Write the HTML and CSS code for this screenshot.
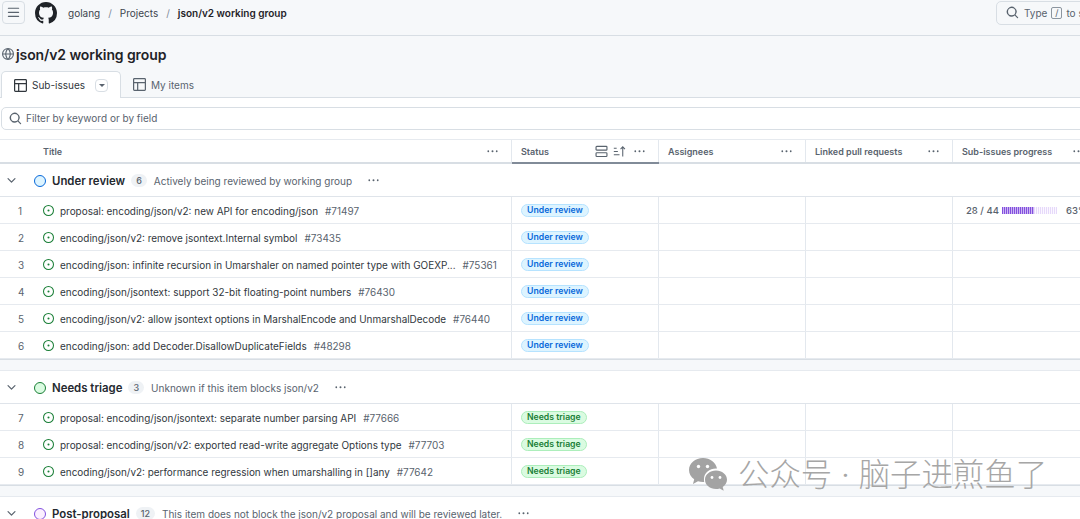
FILE: index.html
```html
<!DOCTYPE html>
<html lang="en">
<head>
<meta charset="utf-8">
<title>json/v2 working group</title>
<link rel="stylesheet" href="styles.css">
</head>
<body>
<svg class="defs" width="0" height="0" aria-hidden="true">
  <symbol id="issue" viewBox="0 0 16 16"><path fill="#1a7f37" d="M8 9.5a1.5 1.5 0 1 0 0-3 1.5 1.5 0 0 0 0 3Z"/><path fill="#1a7f37" d="M8 0a8 8 0 1 1 0 16A8 8 0 0 1 8 0ZM1.5 8a6.5 6.5 0 1 0 13 0 6.5 6.5 0 0 0-13 0Z"/></symbol>
  <symbol id="table" viewBox="0 0 16 16"><path fill="currentColor" d="M0 1.75C0 .784.784 0 1.75 0h12.5C15.216 0 16 .784 16 1.75v12.5A1.75 1.75 0 0 1 14.25 16H1.75A1.75 1.75 0 0 1 0 14.25ZM1.5 6.5v7.75c0 .138.112.25.25.25H5v-8Zm5 8h7.75a.25.25 0 0 0 .25-.25V6.5h-8ZM14.5 5V1.75a.25.25 0 0 0-.25-.25H1.75a.25.25 0 0 0-.25.25V5Z"/></symbol>
  <symbol id="search" viewBox="0 0 16 16"><path fill="currentColor" d="M10.68 11.74a6 6 0 0 1-7.922-8.982 6 6 0 0 1 8.982 7.922l3.04 3.04a.749.749 0 1 1-1.06 1.06ZM11.5 7a4.499 4.499 0 1 0-8.997 0A4.499 4.499 0 0 0 11.5 7Z"/></symbol>
  <symbol id="kebab" viewBox="0 0 16 16"><path fill="currentColor" d="M8 9a1.5 1.5 0 1 0 0-3 1.5 1.5 0 0 0 0 3ZM1.500 9a1.500 1.500 0 1 0 0-3 1.500 1.500 0 0 0 0 3Zm13 0a1.500 1.500 0 1 0 0-3 1.500 1.500 0 0 0 0 3Z"/></symbol>
  <symbol id="chev" viewBox="0 0 16 16"><path fill="currentColor" d="M12.78 5.22a.749.749 0 0 1 0 1.06l-4.25 4.25a.749.749 0 0 1-1.06 0L3.22 6.28a.749.749 0 1 1 1.06-1.06L8 8.939l3.72-3.719a.749.749 0 0 1 1.06 0Z"/></symbol>
</svg>

<header class="topbar">
  <button class="menu-btn" aria-label="Menu">
    <svg class="i13" viewBox="0 0 16 16"><path fill="currentColor" d="M1 2.75A.75.75 0 0 1 1.75 2h12.500a.75.75 0 0 1 0 1.500H1.750A.75.75 0 0 1 1 2.750Zm0 5A.75.75 0 0 1 1.750 7h12.500a.75.75 0 0 1 0 1.500H1.750A.75.75 0 0 1 1 7.750ZM1.750 12h12.500a.75.75 0 0 1 0 1.500H1.750a.75.75 0 0 1 0-1.500Z"/></svg>
  </button>
  <svg class="logo" viewBox="0 0 16 16"><path fill="#1f2328" d="M8 0c4.42 0 8 3.58 8 8a8.013 8.013 0 0 1-5.45 7.59c-.4.08-.55-.17-.55-.38 0-.27.01-1.13.01-2.2 0-.75-.25-1.23-.54-1.48 1.78-.2 3.65-.88 3.65-3.95 0-.88-.31-1.59-.82-2.15.08-.2.36-1.02-.08-2.12 0 0-.67-.22-2.2.82-.64-.18-1.32-.27-2-.27-.68 0-1.36.09-2 .27-1.53-1.03-2.2-.82-2.2-.82-.44 1.1-.16 1.92-.08 2.12-.51.56-.82 1.28-.82 2.15 0 3.06 1.86 3.75 3.64 3.95-.23.2-.44.55-.51 1.07-.46.21-1.61.55-2.33-.66-.15-.24-.6-.83-1.23-.82-.67.01-.27.38.01.53.34.19.73.9.82 1.13.16.45.68 1.31 2.69.94 0 .67.01 1.3.01 1.49 0 .21-.15.45-.55.38A7.995 7.995 0 0 1 0 8c0-4.42 3.58-8 8-8Z"/></svg>
  <nav class="crumbs">
    <span>golang</span><span class="sep">/</span><span>Projects</span><span class="sep">/</span><strong>json/v2 working group</strong>
  </nav>
  <div class="top-search">
    <svg class="i13"><use href="#search"/></svg>
    <span>Type</span><kbd>/</kbd><span>to search</span>
  </div>
</header>

<h1 class="title">
  <svg class="globe" viewBox="0 0 16 16"><path fill="#59636e" d="M8 0a8 8 0 1 1 0 16A8 8 0 0 1 8 0ZM5.78 8.75a9.64 9.64 0 0 0 1.363 4.177c.255.426.542.832.857 1.215.245-.296.551-.705.857-1.215A9.64 9.64 0 0 0 10.22 8.75Zm4.44-1.5a9.64 9.64 0 0 0-1.363-4.177c-.307-.51-.612-.919-.857-1.215a9.927 9.927 0 0 0-.857 1.215A9.64 9.64 0 0 0 5.78 7.25Zm-5.944 1.5H1.543a6.507 6.507 0 0 0 4.666 5.5c-.123-.181-.24-.365-.352-.552-.715-1.192-1.437-2.874-1.581-4.948Zm-2.733-1.5h2.733c.144-2.074.866-3.756 1.58-4.948.12-.197.237-.381.353-.552a6.507 6.507 0 0 0-4.666 5.5Zm10.181 1.5c-.144 2.074-.866 3.756-1.58 4.948-.12.197-.237.381-.353.552a6.507 6.507 0 0 0 4.666-5.5Zm2.733-1.5a6.507 6.507 0 0 0-4.666-5.5c.123.181.24.365.353.552.714 1.192 1.436 2.874 1.58 4.948Z"/></svg>
  json/v2 working group
</h1>

<div class="tabs">
  <div class="tab active">
    <svg class="i13"><use href="#table"/></svg>
    <span>Sub-issues</span>
    <span class="caret-box"><i></i></span>
  </div>
  <div class="tab">
    <svg class="i13"><use href="#table"/></svg>
    <span>My items</span>
  </div>
</div>

<div class="filter-wrap">
  <div class="filter">
    <svg class="i13"><use href="#search"/></svg>
    <span>Filter by keyword or by field</span>
  </div>
</div>

<section class="grid">
  <div class="row head">
    <div class="cell"><span class="h-title">Title</span><svg class="dots"><use href="#kebab"/></svg></div>
    <div class="cell sorted"><span>Status</span>
      <span class="h-tools">
        <svg class="i13" viewBox="0 0 16 16"><path fill="none" stroke="currentColor" stroke-width="1.4" d="M2.2 1.7h11.6a.9.9 0 0 1 .9.9v2.8a.9.9 0 0 1-.9.9H2.2a.9.9 0 0 1-.9-.9V2.600a.9.9 0 0 1 .9-.9ZM2.200 9.600h11.600a.9.9 0 0 1 .9.9v2.800a.9.9 0 0 1-.9.9H2.200a.9.9 0 0 1-.9-.9v-2.800a.9.9 0 0 1 .9-.9Z"/></svg>
        <svg class="i13" viewBox="0 0 16 16"><path fill="none" stroke="currentColor" stroke-width="1.300" d="M1 4h3.500M1 8h5M1 12h7M12 14V2.500M9.300 5 12 2.300 14.700 5"/></svg>
      </span>
      <svg class="dots"><use href="#kebab"/></svg></div>
    <div class="cell"><span>Assignees</span><svg class="dots"><use href="#kebab"/></svg></div>
    <div class="cell"><span>Linked pull requests</span><svg class="dots"><use href="#kebab"/></svg></div>
    <div class="cell last"><span>Sub-issues progress</span><svg class="dots"><use href="#kebab"/></svg></div>
  </div>

  <div class="group-head">
    <svg class="chev"><use href="#chev"/></svg>
    <span class="ring blue"></span>
    <span class="g-name">Under review</span>
    <span class="count">6</span>
    <span class="g-desc">Actively being reviewed by working group</span>
    <svg class="dots g-dots"><use href="#kebab"/></svg>
  </div>
  <div class="row item">
    <div class="cell c-title"><span class="n">1</span><svg class="issue"><use href="#issue"/></svg><span class="t">proposal: encoding/json/v2: new API for encoding/json</span><span class="id">#71497</span></div>
    <div class="cell"><span class="pill p-blue">Under review</span></div><div class="cell"></div><div class="cell"></div>
    <div class="cell progress"><span class="frac">28 / 44</span><span class="bar"><i class="bar-done"></i><i class="bar-rest"></i></span><span class="pct">63%</span></div>
  </div>
  <div class="row item">
    <div class="cell c-title"><span class="n">2</span><svg class="issue"><use href="#issue"/></svg><span class="t">encoding/json/v2: remove jsontext.Internal symbol</span><span class="id">#73435</span></div>
    <div class="cell"><span class="pill p-blue">Under review</span></div><div class="cell"></div><div class="cell"></div><div class="cell"></div>
  </div>
  <div class="row item">
    <div class="cell c-title"><span class="n">3</span><svg class="issue"><use href="#issue"/></svg><span class="t">encoding/json: infinite recursion in Umarshaler on named pointer type with GOEXP...</span><span class="id">#75361</span></div>
    <div class="cell"><span class="pill p-blue">Under review</span></div><div class="cell"></div><div class="cell"></div><div class="cell"></div>
  </div>
  <div class="row item">
    <div class="cell c-title"><span class="n">4</span><svg class="issue"><use href="#issue"/></svg><span class="t">encoding/json/jsontext: support 32-bit floating-point numbers</span><span class="id">#76430</span></div>
    <div class="cell"><span class="pill p-blue">Under review</span></div><div class="cell"></div><div class="cell"></div><div class="cell"></div>
  </div>
  <div class="row item">
    <div class="cell c-title"><span class="n">5</span><svg class="issue"><use href="#issue"/></svg><span class="t">encoding/json/v2: allow jsontext options in MarshalEncode and UnmarshalDecode</span><span class="id">#76440</span></div>
    <div class="cell"><span class="pill p-blue">Under review</span></div><div class="cell"></div><div class="cell"></div><div class="cell"></div>
  </div>
  <div class="row item">
    <div class="cell c-title"><span class="n">6</span><svg class="issue"><use href="#issue"/></svg><span class="t">encoding/json: add Decoder.DisallowDuplicateFields</span><span class="id">#48298</span></div>
    <div class="cell"><span class="pill p-blue">Under review</span></div><div class="cell"></div><div class="cell"></div><div class="cell"></div>
  </div>
  <div class="group-gap"></div>

  <div class="group-head">
    <svg class="chev"><use href="#chev"/></svg>
    <span class="ring green"></span>
    <span class="g-name">Needs triage</span>
    <span class="count">3</span>
    <span class="g-desc">Unknown if this item blocks json/v2</span>
    <svg class="dots g-dots"><use href="#kebab"/></svg>
  </div>
  <div class="row item">
    <div class="cell c-title"><span class="n">7</span><svg class="issue"><use href="#issue"/></svg><span class="t">proposal: encoding/json/jsontext: separate number parsing API</span><span class="id">#77666</span></div>
    <div class="cell"><span class="pill p-green">Needs triage</span></div><div class="cell"></div><div class="cell"></div><div class="cell"></div>
  </div>
  <div class="row item">
    <div class="cell c-title"><span class="n">8</span><svg class="issue"><use href="#issue"/></svg><span class="t">proposal: encoding/json/v2: exported read-write aggregate Options type</span><span class="id">#77703</span></div>
    <div class="cell"><span class="pill p-green">Needs triage</span></div><div class="cell"></div><div class="cell"></div><div class="cell"></div>
  </div>
  <div class="row item">
    <div class="cell c-title"><span class="n">9</span><svg class="issue"><use href="#issue"/></svg><span class="t">encoding/json/v2: performance regression when umarshalling in []any</span><span class="id">#77642</span></div>
    <div class="cell"><span class="pill p-green">Needs triage</span></div><div class="cell"></div><div class="cell"></div><div class="cell"></div>
  </div>
  <div class="group-gap"></div>

  <div class="group-head">
    <svg class="chev"><use href="#chev"/></svg>
    <span class="ring purple"></span>
    <span class="g-name">Post-proposal</span>
    <span class="count">12</span>
    <span class="g-desc">This item does not block the json/v2 proposal and will be reviewed later.</span>
    <svg class="dots g-dots"><use href="#kebab"/></svg>
  </div>
</section>

<div class="watermark">
  <svg class="wechat" viewBox="0 0 40 36">
    <path fill="#a3a3a3" d="M15 1C7.300 1 1 6.300 1 13c0 3.800 2 7 5.200 9.300L5 27l5-2.800c1.500.5 3.200.8 5 .8h1.200A10 10 0 0 1 16 22c0-6 5.500-10.500 12-10.500h1C27.800 5.500 22 1 15 1Z"/>
    <path fill="#a3a3a3" d="M28 13.500c-6 0-11 4-11 9.200s5 9.300 11 9.300c1.300 0 2.600-.2 3.700-.6l4 2.300-1-3.800c2.700-1.700 4.300-4.300 4.300-7.200 0-5.200-5-9.200-11-9.200Z"/>
    <circle cx="10.500" cy="9.500" r="1.700" fill="#fff"/><circle cx="19.500" cy="9.500" r="1.700" fill="#fff"/>
    <circle cx="24" cy="20.500" r="1.400" fill="#fff"/><circle cx="32" cy="20.500" r="1.400" fill="#fff"/>
  </svg>
  <span>公众号 · 脑子进煎鱼了</span>
</div>
</body>
</html>
```

FILE: styles.css
```css
* { box-sizing: border-box; }
html, body { margin: 0; padding: 0; }
body {
  width: 1080px;
  height: 519px;
  overflow: hidden;
  position: relative;
  background: #f6f8fa;
  color: #1f2328;
  font-family: Inter, "Noto Sans CJK SC", sans-serif;
  font-size: 10px;
}
.defs { position: absolute; }
svg { flex: none; display: block; }
.i13 { width: 13px; height: 13px; }

.topbar {
  height: 36px;
  padding: 0 0 10px 2px;
  border-bottom: 1px solid #d8dee4;
  display: flex;
  align-items: center;
  white-space: nowrap;
}
.menu-btn {
  width: 23px;
  height: 23px;
  padding: 0;
  flex: none;
  border: 1px solid #d8dee4;
  border-radius: 4px;
  background: #f6f8fa;
  color: #59636e;
  display: flex;
  align-items: center;
  justify-content: center;
}
.logo { width: 22px; height: 22px; margin-left: 10px; }
.crumbs { display: flex; gap: 8px; margin-left: 11px; color: #3d444d; font-size: 10px; }
.crumbs strong { font-weight: 600; color: #1f2328; }
.sep { color: #818b98; }
.top-search {
  margin-left: auto;
  margin-right: -60px;
  width: 144px;
  height: 24px;
  flex: none;
  border: 1px solid #d8dee4;
  border-radius: 5px;
  display: flex;
  align-items: center;
  gap: 4px;
  padding-left: 9px;
  color: #59636e;
  font-size: 10px;
}
.top-search svg { margin-right: 1px; }
kbd {
  width: 11px;
  height: 12px;
  border: 1px solid #8c959f;
  border-radius: 2px;
  font: 9px Inter, sans-serif;
  text-align: center;
  line-height: 10px;
}

.title {
  margin: 0;
  height: 35px;
  display: flex;
  align-items: center;
  gap: 2px;
  padding: 1px 0 0 2px;
  font-size: 14px;
  font-weight: 600;
  letter-spacing: -0.1px;
}
.globe { width: 12px; height: 12px; }

.tabs {
  height: 27px;
  border-bottom: 1px solid #d8dee4;
  display: flex;
  padding-left: 1px;
}
.tab {
  height: 27px;
  display: flex;
  align-items: center;
  gap: 5px;
  padding: 0 12px;
  color: #59636e;
  font-size: 10px;
  white-space: nowrap;
}
.tab.active {
  width: 120px;
  flex: none;
  background: #fff;
  border: 1px solid #d8dee4;
  border-bottom: 0;
  border-radius: 5px 5px 0 0;
  color: #31373d;
}
.caret-box {
  width: 13px;
  height: 13px;
  margin-left: 5px;
  border: 1px solid #d8dee4;
  border-radius: 4px;
  display: flex;
  align-items: center;
  justify-content: center;
}
.caret-box i { border: 3px solid transparent; border-top: 3px solid #59636e; border-bottom: 0; }

.filter-wrap { height: 41px; padding: 9px 0 0 1px; background: #fff; }
.filter {
  width: 1090px;
  height: 23px;
  padding: 0 0 1px 7px;
  border: 1px solid #d8dee4;
  border-radius: 5px;
  display: flex;
  align-items: center;
  gap: 4px;
  color: #59636e;
  font-size: 10px;
}

.grid { background: #fff; }
.row {
  display: grid;
  grid-template-columns: 512px 147px 147px 147px 200px;
}
.head {
  height: 25px;
  border-top: 1px solid #e6eaef;
  border-bottom: 2px solid #d8dee4;
  font-size: 9px;
  font-weight: 600;
  color: #59636e;
}
.cell {
  display: flex;
  align-items: center;
  min-width: 0;
  padding: 0 9px;
  border-right: 1px solid #e3e8ee;
  white-space: nowrap;
}
.head .cell { justify-content: space-between; padding-right: 12px; }
.head .cell.last { justify-content: flex-start; gap: 20px; }
.h-title { margin-left: 34px; }
.dots { width: 13px; height: 13px; color: #59636e; transform: scale(.82); }
.sorted { box-shadow: 0 2px 0 #818b98; }
.h-tools { display: flex; gap: 5px; margin-left: auto; margin-right: 7px; }

.group-head {
  height: 33px;
  padding: 1px 0 0 5px;
  border-bottom: 1px solid #dfe4ea;
  display: flex;
  align-items: center;
  white-space: nowrap;
}
.chev { width: 13px; height: 13px; color: #59636e; }
.ring {
  width: 12px;
  height: 12px;
  flex: none;
  border-radius: 50%;
  margin-left: 16px;
  border: 1.5px solid;
}
.ring.blue { border-color: #0969da; background: #ddf4ff; }
.ring.green { border-color: #1a7f37; background: #dafbe1; }
.ring.purple { border-color: #8250df; background: #fbefff; }
.g-name { margin-left: 6px; font-size: 11.4px; font-weight: 600; color: #24292f; }
.count {
  min-width: 15px;
  height: 13px;
  margin-left: 6px;
  padding: 0 5px;
  border-radius: 7px;
  background: #eff2f5;
  color: #59636e;
  font-size: 9px;
  font-weight: 500;
  line-height: 13px;
  text-align: center;
}
.g-desc { margin-left: 7px; color: #59636e; font-size: 10px; }
.g-dots { margin-left: 15px; }

.item { height: 27px; border-bottom: 1px solid #e6eaef; }
.c-title { padding: 1px 0 0; color: #31373d; font-size: 9.95px; }
.n { width: 41px; flex: none; padding-left: 18px; color: #59636e; }
.issue { width: 11px; height: 11px; margin-left: 2px; }
.t { margin-left: 6px; flex: none; }
.id { margin-left: 7px; flex: none; color: #59636e; }
.pill {
  height: 13px;
  padding: 0 5px;
  border-radius: 7px;
  font-size: 8.7px;
  font-weight: 600;
  line-height: 11px;
  border: 1px solid;
}
.p-blue { background: #ddf4ff; border-color: #b6e3ff; color: #0969da; }
.p-green { background: #dafbe1; border-color: #aceebb; color: #1a7f37; }
.progress { padding: 1px 0 0 13px; color: #59636e; font-weight: 500; }
.frac { width: 36px; font-size: 9.5px; }
.bar { display: flex; width: 55px; height: 7px; }
.bar i { display: block; height: 100%; }
.bar-done { width: 58%; background: repeating-linear-gradient(90deg, #8250df 0 1px, #cdb6f2 1px 2px); }
.bar-rest { width: 42%; background: repeating-linear-gradient(90deg, #e6d9fa 0 1px, #fbf8ff 1px 2px); }
.pct { margin-left: 9px; font-size: 9.5px; }

.group-gap {
  height: 12px;
  background: #f6f8fa;
  border-top: 1px solid #d8dee4;
  border-bottom: 1px solid #e6eaef;
}

.watermark {
  position: absolute;
  left: 686px;
  top: 457px;
  display: flex;
  align-items: center;
  gap: 8px;
  color: #a6a6a6;
  font-size: 31.4px;
  font-weight: 300;
  line-height: 36px;
  white-space: nowrap;
}
.wechat { width: 44px; height: 36px; }
```
